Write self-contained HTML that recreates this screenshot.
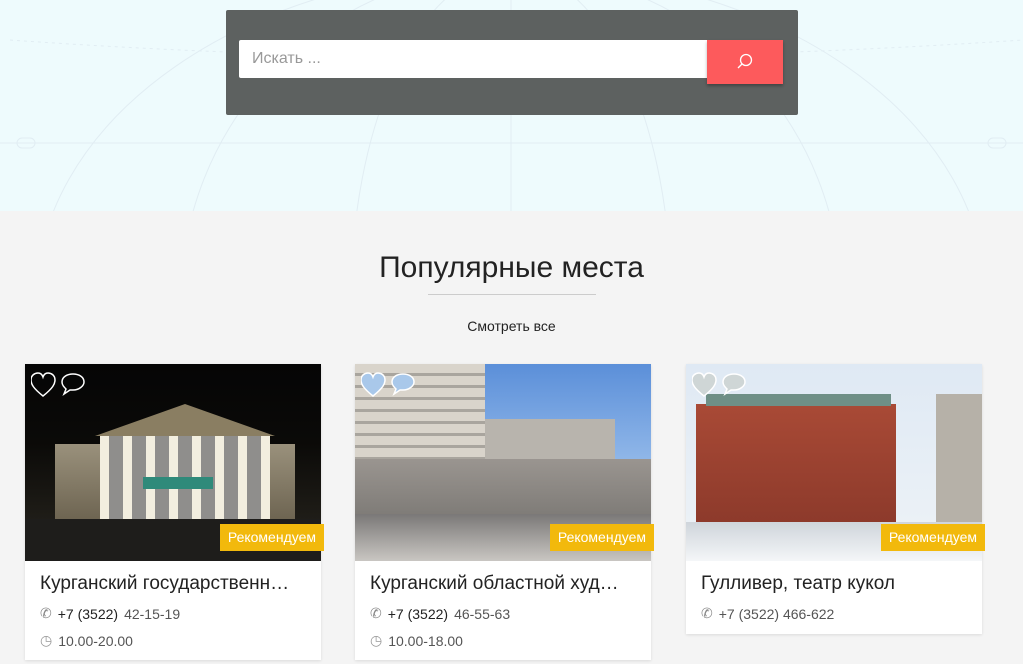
<!DOCTYPE html>
<html><head><meta charset="utf-8"><style>
*{margin:0;padding:0;box-sizing:border-box}
body{width:1023px;height:664px;overflow:hidden;background:#f4f4f4;font-family:"Liberation Sans",sans-serif;position:relative}
.hero{position:absolute;left:0;top:0;width:1023px;height:211px;background:#eefbfd;overflow:hidden}
.box{position:absolute;left:226px;top:10px;width:572px;height:105px;background:#5d6160;border-radius:2px}
.inp{position:absolute;left:239px;top:40px;width:469px;height:38px;background:#fff;border-radius:2px 0 0 2px;color:#999;font-size:16px;line-height:38px;padding-left:13px}
.btn{position:absolute;left:707px;top:40px;width:76px;height:44px;background:#fd5a5c;box-shadow:0 2px 3px rgba(0,0,0,.3)}
h2{position:absolute;top:251px;left:0;width:1023px;text-align:center;font-weight:normal;font-size:30px;color:#222}
.ln{position:absolute;left:428px;top:294px;width:168px;height:1px;background:#ccc}
.all{position:absolute;top:318px;left:0;width:1023px;text-align:center;font-size:14px;color:#222}
.card{position:absolute;top:364px;width:296px;background:#fff;box-shadow:0 1px 3px rgba(0,0,0,.1)}
.img{height:197px;position:relative;overflow:hidden}
.badge{position:absolute;top:160px;right:-3px;background:#f2b90c;color:#fff;font-size:14px;padding:0 8px;height:27px;line-height:27px;z-index:2}
.t{font-size:19px;color:#222;padding:12px 15px 0;white-space:nowrap}
.r{font-size:14px;color:#555;padding:10px 15px 0;display:flex;align-items:center;gap:6px}
.r b{font-weight:normal;color:#222}
.ic{position:absolute;top:8px;left:6px}
</style></head><body>
<div class="hero">
<svg width="1023" height="211" style="position:absolute;left:0;top:0" fill="none" stroke="#e1edf3" stroke-width="1">
<path d="M0 143 H1023"/><path d="M10 40 Q500 75 1023 40" stroke-dasharray="3 4"/>
<ellipse cx="511" cy="300" rx="475" ry="330"/><ellipse cx="511" cy="300" rx="330" ry="330"/><ellipse cx="511" cy="300" rx="160" ry="330"/>
<path d="M511 0 V211"/><rect x="17" y="138" width="18" height="10" rx="5"/><rect x="988" y="138" width="18" height="10" rx="5"/>
</svg>
</div>
<div class="box"></div>
<div class="inp">Искать ...</div>
<div class="btn"><svg width="76" height="44"><circle cx="39" cy="20" r="5.5" fill="none" stroke="#fff" stroke-width="1.3"/><path d="M35 24 L31 28" stroke="#fff" stroke-width="1.3"/></svg></div>
<h2>Популярные места</h2><div class="ln"></div>
<div class="all">Смотреть все</div>

<div class="card" style="left:25px;height:296px">
<div class="badge">Рекомендуем</div>
<div class="img" style="background:linear-gradient(#050505 0,#0b0a08 40%,#1d1b16 75%,#2a2824 100%)">
<div style="position:absolute;left:30px;top:80px;width:240px;height:80px;background:linear-gradient(#9a917c,#6b624f)"></div>
<div style="position:absolute;left:70px;top:40px;width:0;height:0;border-left:90px solid transparent;border-right:90px solid transparent;border-bottom:32px solid #8a7e62"></div>
<div style="position:absolute;left:75px;top:72px;width:170px;height:85px;background:repeating-linear-gradient(90deg,#f2eedf 0 9px,#8f8e8c 9px 23px)"></div>
<div style="position:absolute;left:118px;top:113px;width:70px;height:12px;background:#2f8a7a"></div>
<div style="position:absolute;left:0;top:155px;width:296px;height:42px;background:#1e1d1b"></div>
<svg class="ic" width="60" height="26" fill="none" stroke="#fff" stroke-width="1.5"><path d="M12 24 C2 16 0 12 0 8 C0 3 4 1 7 1 C9 1 11 2 12 5 C13 2 15 1 17 1 C20 1 24 3 24 8 C24 12 22 16 12 24Z"/><path d="M42 2 C36 2 31 5 31 10 C31 13 33 15 35 17 L33 22 L39 18 C40 18 41 18 42 18 C48 18 53 14 53 10 C53 5 48 2 42 2Z"/></svg>
</div>
<div class="t">Курганский государственн…</div>
<div class="r"><span style="color:#888">✆</span><b>+7 (3522)</b> 42-15-19</div>
<div class="r"><span style="color:#999">◷</span>10.00-20.00</div>
</div>

<div class="card" style="left:355px;height:296px">
<div class="badge">Рекомендуем</div>
<div class="img" style="background:linear-gradient(#5b8fd9,#9cc0ec 60%,#c9d3d9)">
<div style="position:absolute;left:0;top:0;width:130px;height:150px;background:repeating-linear-gradient(#d9d4cb 0 9px,#a9a59e 9px 12px)"></div>
<div style="position:absolute;left:130px;top:55px;width:130px;height:95px;background:#b8b4ad"></div>
<div style="position:absolute;left:0;top:95px;width:296px;height:60px;background:linear-gradient(#9a9590,#7d7a76)"></div>
<div style="position:absolute;left:0;top:150px;width:296px;height:47px;background:linear-gradient(#7a7877,#c9c6c2)"></div>
<svg class="ic" width="60" height="26" fill="#a9c8ea" stroke="#fff" stroke-width="1.5"><path d="M12 24 C2 16 0 12 0 8 C0 3 4 1 7 1 C9 1 11 2 12 5 C13 2 15 1 17 1 C20 1 24 3 24 8 C24 12 22 16 12 24Z"/><path d="M42 2 C36 2 31 5 31 10 C31 13 33 15 35 17 L33 22 L39 18 C40 18 41 18 42 18 C48 18 53 14 53 10 C53 5 48 2 42 2Z"/></svg>
</div>
<div class="t">Курганский областной худ…</div>
<div class="r"><span style="color:#888">✆</span><b>+7 (3522)</b> 46-55-63</div>
<div class="r"><span style="color:#999">◷</span>10.00-18.00</div>
</div>

<div class="card" style="left:686px;height:270px">
<div class="badge">Рекомендуем</div>
<div class="img" style="background:linear-gradient(#dfe9f4,#eef3f7)">
<div style="position:absolute;left:10px;top:40px;width:200px;height:118px;background:linear-gradient(#a94a36,#8d3a2b)"></div>
<div style="position:absolute;left:20px;top:30px;width:185px;height:12px;background:#6f8f86"></div>
<div style="position:absolute;left:250px;top:30px;width:46px;height:130px;background:#b6b1a8"></div>
<div style="position:absolute;left:0;top:158px;width:296px;height:39px;background:linear-gradient(#cfd5db,#f4f6f8)"></div>
<svg class="ic" width="60" height="26" fill="#cfd6d6" stroke="#fff" stroke-width="1.5"><path d="M12 24 C2 16 0 12 0 8 C0 3 4 1 7 1 C9 1 11 2 12 5 C13 2 15 1 17 1 C20 1 24 3 24 8 C24 12 22 16 12 24Z"/><path d="M42 2 C36 2 31 5 31 10 C31 13 33 15 35 17 L33 22 L39 18 C40 18 41 18 42 18 C48 18 53 14 53 10 C53 5 48 2 42 2Z"/></svg>
</div>
<div class="t">Гулливер, театр кукол</div>
<div class="r"><span style="color:#888">✆</span>+7 (3522) 466-622</div>
</div>
</body></html>
